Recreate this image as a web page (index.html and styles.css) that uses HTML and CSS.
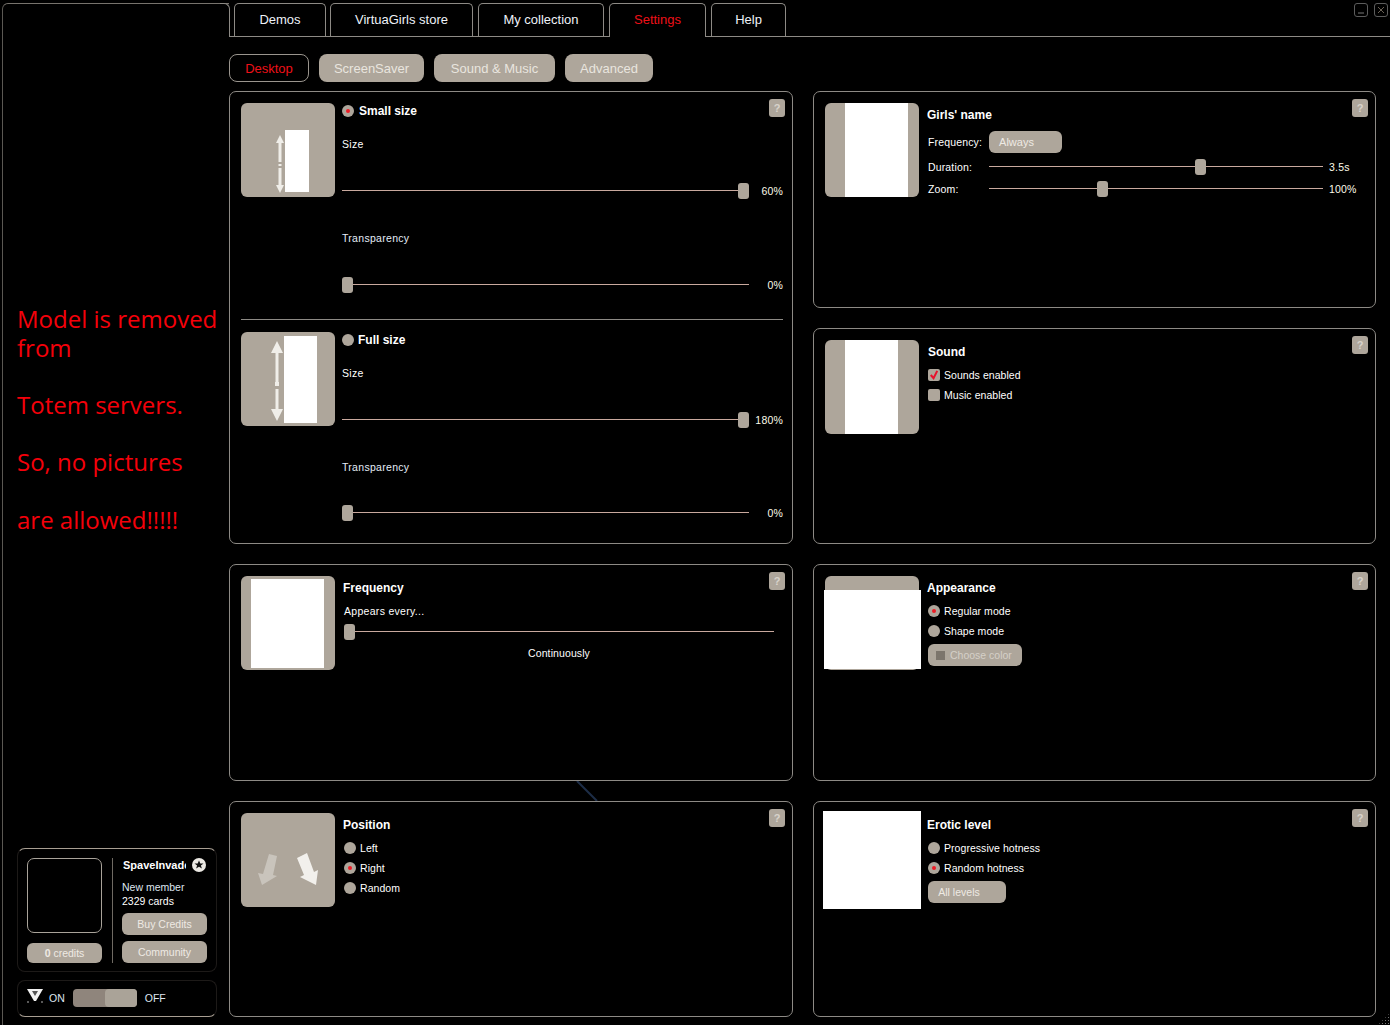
FILE: index.html
```html
<!DOCTYPE html>
<html lang="en">
<head>
  <meta charset="UTF-8">
  <title>VirtuaGirls settings</title>
  <link rel="stylesheet" href="styles.css">
</head>
<body>
  <div class="app">
    <aside class="sidebar">
      <p class="notice">Model is removed<br>from<br><br>Totem servers.<br><br>So, no pictures<br><br>are allowed!!!!!</p>

      <div class="card profile">
        <div class="profile-left">
          <div class="avatar"></div>
          <button class="btn credits"><b>0</b> credits</button>
        </div>
        <div class="profile-right">
          <div class="name-row">
            <span class="name">SpaveInvader</span>
            <svg class="star" viewBox="0 0 14 14"><circle cx="7" cy="7" r="7" fill="#ece9e4"/><path d="M7 2.400l1.300 3h3.200l-2.600 2 1 3.200L7 8.800l-2.900 1.800 1-3.200-2.600-2h3.200z" fill="#111"/></svg>
          </div>
          <div class="member">New member<br><span>2329 cards</span></div>
          <button class="btn side-btn">Buy Credits</button>
          <button class="btn side-btn">Community</button>
        </div>
      </div>

      <div class="card onoff">
        <svg class="logo" viewBox="0 0 16 16"><path d="M0 1h16l-7 12h-2z" fill="#f2f2f2"/><path d="M5 3h6l-3 5z" fill="#555"/><circle cx="1" cy="14" r="1" fill="#777"/><circle cx="15" cy="14" r="1" fill="#777"/></svg>
        <span>ON</span>
        <div class="toggle"><div class="toggle-knob"></div></div>
        <span>OFF</span>
      </div>
    </aside>

    <main class="main">
      <div class="window-btns">
        <span class="win-btn"><svg viewBox="0 0 12 12"><path d="M3 9h6" stroke="#777" fill="none"/></svg></span>
        <span class="win-btn"><svg viewBox="0 0 12 12"><path d="M3 3l6 6M9 3l-6 6" stroke="#6b6257" fill="none"/></svg></span>
      </div>

      <nav class="tabs">
        <a class="tab tab-demos">Demos</a>
        <a class="tab tab-store">VirtuaGirls store</a>
        <a class="tab tab-coll">My collection</a>
        <a class="tab tab-set active">Settings</a>
        <a class="tab tab-help">Help</a>
      </nav>

      <div class="subtabs">
        <a class="subtab sub-desktop active">Desktop</a>
        <a class="subtab sub-saver">ScreenSaver</a>
        <a class="subtab sub-sound">Sound &amp; Music</a>
        <a class="subtab sub-adv">Advanced</a>
      </div>

      <div class="panels">
        <!-- size panel takes two rows -->
        <section class="panel panel-size">
          <span class="help">?</span>
          <div class="size-block">
            <div class="thumb">
              <div class="shot shot-small"></div>
              <svg class="arrows arrows-small" viewBox="0 0 10 58"><path d="M5 0l4 8H6.500v19h-3V8H1zM3.500 29h3v2h-3zM3.500 33h3v17H9l-4 8-4-8h2.500z" fill="#f0eee9"/></svg>
            </div>
            <div class="size-col">
              <label class="radio-row title"><i class="radio on"></i>Small size</label>
              <div class="lbl lbl-size">Size</div>
              <div class="slider slider-first"><div class="track"><div class="rail"><i class="knob" style="left:100%"></i></div></div><span class="val">60%</span></div>
              <div class="lbl lbl-trans">Transparency</div>
              <div class="slider slider-second"><div class="track"><div class="rail"><i class="knob" style="left:0%"></i></div></div><span class="val">0%</span></div>
            </div>
          </div>
          <hr class="divider">
          <div class="size-block">
            <div class="thumb">
              <div class="shot shot-full"></div>
              <svg class="arrows arrows-full" viewBox="0 0 12 80"><path d="M6 0l6 12H7.500v32h-3V12H0zM4 41h4v4H4zM4.500 48h3v20H12l-6 12-6-12h4.500z" fill="#f0eee9"/></svg>
            </div>
            <div class="size-col">
              <label class="radio-row title title-full"><i class="radio"></i>Full size</label>
              <div class="lbl lbl-size">Size</div>
              <div class="slider slider-first"><div class="track"><div class="rail"><i class="knob" style="left:100%"></i></div></div><span class="val">180%</span></div>
              <div class="lbl lbl-trans">Transparency</div>
              <div class="slider slider-third"><div class="track"><div class="rail"><i class="knob" style="left:0%"></i></div></div><span class="val">0%</span></div>
            </div>
          </div>
        </section>

        <section class="panel">
          <span class="help">?</span>
          <div class="panel-row">
            <div class="thumb"><div class="shot shot-name"></div></div>
            <div class="col col-name">
              <h3 class="title">Girls' name</h3>
              <div class="field field-freq"><span class="field-lbl">Frequency:</span><button class="btn always">Always</button></div>
              <div class="field field-dur">
                <span class="field-lbl">Duration:</span>
                <div class="slider"><div class="track"><div class="rail"><i class="knob" style="left:63.8%"></i></div></div><span class="val val-left">3.5s</span></div>
              </div>
              <div class="field field-zoom">
                <span class="field-lbl">Zoom:</span>
                <div class="slider"><div class="track"><div class="rail"><i class="knob" style="left:33.4%"></i></div></div><span class="val val-left">100%</span></div>
              </div>
            </div>
          </div>
        </section>

        <section class="panel">
          <span class="help">?</span>
          <div class="panel-row">
            <div class="thumb"><div class="shot shot-sound"></div></div>
            <div class="col col-right">
              <h3 class="title title-sound">Sound</h3>
              <div class="opts">
                <label class="radio-row"><i class="check"><svg viewBox="0 0 13 13"><path d="M3 6.500l3 3.500 4-8" stroke="#e8112d" stroke-width="2.200" fill="none"/></svg></i>Sounds enabled</label>
                <label class="radio-row"><i class="check"></i>Music enabled</label>
              </div>
            </div>
          </div>
        </section>

        <section class="panel">
          <span class="help">?</span>
          <div class="panel-row">
            <div class="thumb"><div class="shot shot-freq"></div></div>
            <div class="col col-freq">
              <h3 class="title">Frequency</h3>
              <div class="lbl appears">Appears every...</div>
              <div class="track freq-track"><div class="rail"><i class="knob" style="left:0%"></i></div></div>
              <div class="lbl continuously">Continuously</div>
            </div>
          </div>
        </section>

        <section class="panel">
          <span class="help">?</span>
          <div class="panel-row">
            <div class="thumb"><div class="shot shot-appear"></div></div>
            <div class="col col-right">
              <h3 class="title">Appearance</h3>
              <div class="opts">
                <label class="radio-row"><i class="radio on"></i>Regular mode</label>
                <label class="radio-row"><i class="radio"></i>Shape mode</label>
              </div>
              <button class="btn color-btn"><i class="swatch"></i>Choose color</button>
            </div>
          </div>
        </section>

        <section class="panel">
          <span class="help">?</span>
          <div class="panel-row">
            <div class="thumb">
              <svg class="pos-arrows" viewBox="0 0 94 94">
                <path d="M28 41l8 2-4 19 4 1-15 9-4-12 5 1z" fill="#c9c4bc"/>
                <path d="M56 45l10-5 7 19 4-2-2 15-16-8 4-2z" fill="#f2f0ec"/>
              </svg>
            </div>
            <div class="col col-pos">
              <h3 class="title">Position</h3>
              <div class="opts">
                <label class="radio-row"><i class="radio"></i>Left</label>
                <label class="radio-row"><i class="radio on"></i>Right</label>
                <label class="radio-row"><i class="radio"></i>Random</label>
              </div>
            </div>
          </div>
        </section>

        <section class="panel">
          <span class="help">?</span>
          <div class="panel-row">
            <div class="thumb thumb-plain"><div class="shot shot-erotic"></div></div>
            <div class="col col-right">
              <h3 class="title">Erotic level</h3>
              <div class="opts">
                <label class="radio-row"><i class="radio"></i>Progressive hotness</label>
                <label class="radio-row"><i class="radio on"></i>Random hotness</label>
              </div>
              <button class="btn levels-btn">All levels</button>
            </div>
          </div>
        </section>
      </div>

      <!-- background streak showing between the panels -->
      <svg class="streak" viewBox="0 0 22 20"><path d="M1 0l20 20" stroke="#1d2d47" stroke-width="2" fill="none"/></svg>
    </main>
  </div>
</body>
</html>
```

FILE: styles.css
```css
/* Base */
html, body {
  margin: 0;
  height: 100%;
  background: #000;
  overflow: hidden;
}
body {
  font-family: "Liberation Sans", Arial, sans-serif;
  font-size: 11px;
  color: #fff;
}
*, *:before, *:after {
  box-sizing: border-box;
}
i {
  font-style: normal;
}

.app {
  position: relative;
  display: flex;
  height: 1025px;
}
/* resize grip, bottom right of the window */
.app:after {
  content: "";
  position: absolute;
  right: 0;
  bottom: 0;
  width: 12px;
  height: 12px;
  background: radial-gradient(circle, #777 0, #777 1px, transparent 1px) 0 0 / 3px 3px;
  clip-path: polygon(100% 0, 100% 100%, 0 100%);
}

/* Sidebar */
.sidebar {
  position: relative;
  width: 227px;
  flex: none;
  margin: 3px 0 0 2px;
  display: flex;
  flex-direction: column;
  padding: 0 0 8px 14px;
  border-top: 1px solid #77736d;
  border-left: 1px solid #5b5853;
  border-top-left-radius: 6px;
}
.sidebar:before {
  content: "";
  position: absolute;
  top: -1px;
  right: -1px;
  width: 10px;
  height: 34px;
  border-top: 1px solid #8d8a85;
  border-right: 1px solid #8d8a85;
  border-top-right-radius: 6px;
}
.notice {
  margin: 301px 0 0;
  font-family: "Open Sans", sans-serif;
  font-size: 24px;
  line-height: 28.670px;
  color: #f5000a;
  white-space: nowrap;
}
.card {
  width: 200px;
  border: 1px solid #a89e92;
  border-left-color: #1d1a18;
  border-right-color: #1d1a18;
  border-radius: 8px;
}
.profile {
  margin-top: auto;
  height: 124px;
  display: flex;
  padding: 9px 9px 8px 9px;
  border-bottom-color: #1d1a18;
}
.profile-left {
  width: 76px;
  display: flex;
  flex-direction: column;
  justify-content: space-between;
}
.avatar {
  width: 75px;
  height: 75px;
  border: 1px solid #a9a39a;
  border-radius: 7px;
}
.credits {
  width: 75px;
  height: 20px;
  color: #e8e4de;
}
.profile-right {
  width: 95px;
  margin-left: 9px;
  padding-left: 9px;
  border-left: 1px solid #6f6a63;
  display: flex;
  flex-direction: column;
}
.name-row {
  display: flex;
  align-items: center;
  height: 14px;
  padding-left: 1px;
}
.name {
  width: 63px;
  overflow: hidden;
  white-space: nowrap;
  font-weight: bold;
  font-size: 11px;
}
.star {
  width: 14px;
  height: 14px;
  margin-left: 6px;
}
.member {
  margin-top: 8px;
  line-height: 14px;
  font-size: 10.500px;
  color: #dfe6f0;
}
.member span {
  color: #fff;
}
.side-btn {
  width: 85px;
  height: 22px;
  margin-top: 6px;
  font-size: 10.500px;
}
.member + .side-btn {
  margin-top: 5px;
}
.onoff {
  margin-top: 8px;
  height: 37px;
  display: flex;
  align-items: center;
  padding: 0 0 2px 9px;
  border-top-color: #1d1a18;
  font-size: 10.500px;
  color: #dfe6f0;
}
.logo {
  width: 16px;
  height: 16px;
  margin: -4px 6px 0 0;
}
.toggle {
  width: 64px;
  height: 18px;
  margin: 0 8px;
  border-radius: 4px;
  background: #8f857c;
  display: flex;
  justify-content: flex-end;
}
.toggle-knob {
  width: 32px;
  height: 18px;
  border-radius: 4px;
  background: #aaa398;
}

/* Buttons */
.btn {
  border: 0;
  padding: 0;
  border-radius: 6px;
  background: #aea69b;
  color: #eeeae4;
  font-family: inherit;
  font-size: 10.500px;
  text-align: center;
}

/* Main column */
.main {
  flex: 1;
  position: relative;
  min-width: 0;
}
.window-btns {
  position: absolute;
  top: 3px;
  right: 2px;
  display: flex;
  gap: 6px;
}
.win-btn {
  width: 14px;
  height: 14px;
  border: 1px solid #5c5c5c;
  border-radius: 3px;
  display: block;
}
.win-btn svg {
  display: block;
  width: 12px;
  height: 12px;
}
.streak {
  position: absolute;
  left: 347px;
  top: 781px;
  width: 22px;
  height: 20px;
}

.tabs {
  height: 37px;
  padding: 3px 0 0 5px;
  display: flex;
  border-bottom: 1px solid #8d8a85;
}
.tab {
  height: 34px;
  border: 1px solid #8d8a85;
  border-bottom: 0;
  border-radius: 5px 5px 0 0;
  margin-right: 5px;
  font-size: 13px;
  line-height: 32px;
  text-align: center;
  color: #eef2f8;
}
.tab-demos { width: 92px; margin-right: 4px; }
.tab-store { width: 143px; }
.tab-coll { width: 126px; }
.tab-set { width: 97px; }
.tab-help { width: 75px; }
.tab.active {
  background: #000;
  color: #ef1018;
  margin-bottom: -1px;
  position: relative;
}

.subtabs {
  display: flex;
  gap: 10px;
  margin-top: 17px;
  height: 28px;
}
.subtab {
  height: 28px;
  border-radius: 8px;
  background: #aea69b;
  color: #e9e5df;
  font-size: 13px;
  line-height: 29px;
  text-align: center;
}
.sub-desktop { width: 80px; }
.sub-saver { width: 105px; }
.sub-sound { width: 121px; }
.sub-adv { width: 88px; }
.subtab.active {
  background: #000;
  border: 1px solid #9a958e;
  color: #ef1018;
  line-height: 27px;
}

/* Panels */
.panels {
  display: grid;
  grid-template-columns: 564px 563px;
  grid-template-rows: 217px 216px 217px 216px;
  gap: 20px;
  margin-top: 9px;
}
.panel {
  position: relative;
  border: 1px solid #8d8a85;
  border-radius: 7px;
  padding: 11px 9px 0 11px;
}
.panel-size {
  grid-row: span 2;
}
.help {
  position: absolute;
  top: 7px;
  right: 7px;
  width: 16px;
  height: 18px;
  border-radius: 3px;
  background: #aea69b;
  color: #d8d3cb;
  font-size: 11px;
  font-weight: bold;
  line-height: 18px;
  text-align: center;
}
.panel-row,
.size-block {
  display: flex;
}
.thumb {
  position: relative;
  width: 94px;
  height: 94px;
  flex: none;
  border-radius: 6px;
  background: #aea69b;
}
.thumb-plain {
  background: none;
}
.shot {
  position: absolute;
  background: #fff;
}
.shot-small { left: 44px; top: 27px; width: 24px; height: 62px; }
.shot-full { left: 43px; top: 4px; width: 33px; height: 87px; }
.shot-name { left: 20px; top: 0; width: 63px; height: 94px; }
.shot-sound { left: 20px; top: 0; width: 53px; height: 94px; }
.shot-freq { left: 10px; top: 3px; width: 73px; height: 89px; }
.shot-appear { left: -1px; top: 14px; width: 97px; height: 79px; }
.shot-erotic { left: -2px; top: -2px; width: 98px; height: 98px; }
.arrows {
  position: absolute;
}
.arrows-small { left: 34px; top: 32px; width: 10px; height: 58px; }
.arrows-full { left: 30px; top: 9px; width: 12px; height: 80px; }
.pos-arrows {
  display: block;
  width: 94px;
  height: 94px;
}

.divider {
  border: 0;
  border-top: 1px solid #8d8a85;
  margin: 26px 0 12px;
}

.size-col {
  margin-left: 7px;
  flex: 1;
  display: flex;
  flex-direction: column;
}
.title {
  margin: 0;
  height: 14px;
  font-size: 12px;
  font-weight: bold;
  line-height: 14px;
  color: #fff;
}
.radio-row {
  display: flex;
  align-items: center;
  gap: 4px;
  height: 14px;
  line-height: 14px;
}
.radio-row.title {
  gap: 5px;
  margin-top: 1px;
}
.radio-row.title-full {
  gap: 4px;
}
.opts .radio-row {
  font-size: 10.500px;
  letter-spacing: 0.050px;
}
.radio {
  width: 12px;
  height: 12px;
  flex: none;
  border-radius: 50%;
  background: #aea69b;
  display: flex;
  align-items: center;
  justify-content: center;
}
.radio.on:before {
  content: "";
  width: 4px;
  height: 4px;
  border-radius: 50%;
  background: #ee1c25;
}
.check {
  width: 12px;
  height: 12px;
  flex: none;
  border-radius: 2px;
  background: #aea69b;
}
.check svg {
  display: block;
  width: 12px;
  height: 12px;
}
.lbl {
  height: 14px;
  line-height: 14px;
  font-size: 10.500px;
  letter-spacing: 0.300px;
}
.lbl-size { margin-top: 19px; }
.lbl-trans { margin-top: 32px; color: #e4edf8; }

/* Sliders */
.slider {
  display: flex;
  align-items: center;
  height: 16px;
  flex: 1;
}
.slider-first { flex: none; margin-top: 32px; }
.slider-second { flex: none; margin-top: 32px; }
.slider-third { flex: none; margin-top: 31px; }
.track {
  flex: 1;
  height: 16px;
  padding-right: 11px;
  background: linear-gradient(#c9a99e, #c9a99e) 0 7px / 100% 1px no-repeat;
}
.rail {
  position: relative;
  height: 16px;
}
.knob {
  position: absolute;
  top: 0;
  width: 11px;
  height: 16px;
  border-radius: 3px;
  background: #aea69b;
}
.val {
  width: 34px;
  flex: none;
  text-align: right;
  font-size: 10.500px;
  letter-spacing: 0.200px;
  color: #fdfbe9;
}
.val-left {
  text-align: left;
  padding-left: 6px;
}

/* Right hand panels */
.col {
  margin-left: 8px;
  flex: 1;
  display: flex;
  flex-direction: column;
  align-items: flex-start;
}
.col .title {
  margin-top: 5px;
}
.col .title-sound {
  margin-left: 1px;
}
.col-right .opts {
  margin: 9px 0 0 1px;
}
.opts {
  display: flex;
  flex-direction: column;
  gap: 6px;
  margin-top: 9px;
}
.field {
  display: flex;
  align-items: center;
  width: 429px;
  margin-left: 1px;
}
.field-lbl {
  width: 61px;
  flex: none;
  font-size: 10.500px;
  letter-spacing: 0.150px;
}
.field-freq { height: 22px; margin-top: 9px; }
.field-dur { margin-top: 6px; height: 16px; }
.field-zoom { margin-top: 6px; height: 16px; }
.always {
  width: 73px;
  height: 22px;
  padding-right: 18px;
  font-size: 11px;
}
.color-btn {
  width: 94px;
  height: 22px;
  margin: 6px 0 0 1px;
  display: flex;
  align-items: center;
  padding-left: 8px;
  gap: 5px;
  color: #d5d0c8;
}
.swatch {
  width: 9px;
  height: 9px;
  background: #7c756c;
}
.levels-btn {
  width: 78px;
  height: 22px;
  margin: 6px 0 0 1px;
  padding-right: 16px;
}

.col-freq {
  width: 430px;
  flex: none;
}
.appears {
  margin: 9px 0 0 1px;
}
.freq-track {
  flex: none;
  width: 430px;
  margin: 6px 0 0 1px;
}
.continuously {
  align-self: center;
  margin-top: 6px;
  padding-left: 2px;
  letter-spacing: 0.100px;
}
.col-pos .opts {
  margin-left: 1px;
}
```
